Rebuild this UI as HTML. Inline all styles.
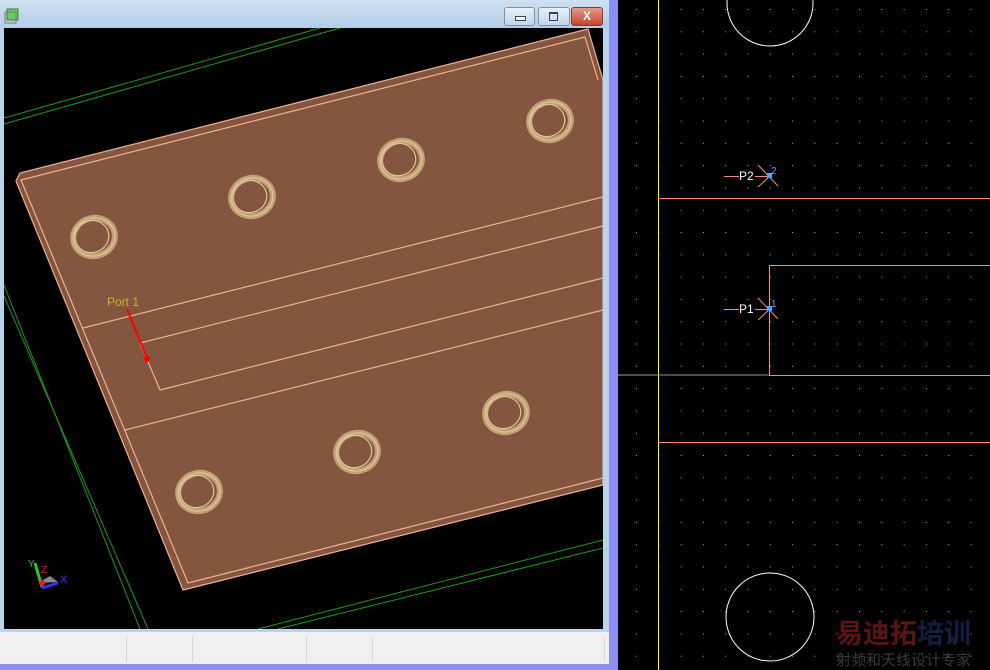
<!DOCTYPE html><html><head><style>
body{margin:0;width:990px;height:670px;overflow:hidden;background:#000;position:relative;font-family:"Liberation Sans",sans-serif}
.win{position:absolute;left:0;top:0;width:609px;height:670px;background:#b9d3ea}
.tb{position:absolute;left:0;top:0;width:609px;height:28px;background:linear-gradient(#cfe0f1,#b3cde8)}
.btn{position:absolute;top:7px;height:17px;border:1px solid #7d91ad;border-radius:3px;background:linear-gradient(#e8f0f8,#c4d5ea)}
.status{position:absolute;left:0;top:632px;width:609px;height:32px;background:#f0f0f0}
.purple{position:absolute;left:609px;top:0;width:9px;height:670px;background:#8c8ef0}
.pb{position:absolute;left:0;top:664px;width:618px;height:6px;background:#8c8ef0}
</style></head><body>
<div class="win">
<div class="tb"></div>
<svg style="position:absolute;left:4px;top:8px" width="16" height="16"><rect x="3" y="1" width="11" height="11" fill="#6c6" stroke="#474"/><rect x="1" y="4" width="11" height="11" fill="none" stroke="#777"/></svg>
<div class="btn" style="left:504px;width:29px"><div style="position:absolute;left:10px;top:8px;width:9px;height:3px;border:1px solid #345;background:#fff"></div></div>
<div class="btn" style="left:538px;width:30px"><div style="position:absolute;left:10px;top:4px;width:7px;height:6px;border:1px solid #345;border-top-width:2px"></div></div>
<div class="btn" style="left:571px;width:30px;background:linear-gradient(#e49a88,#c8452f);border-color:#8a3a2a;color:#fff;font-weight:bold;font-size:12px;text-align:center;line-height:17px">X</div>
<svg style="position:absolute;left:4px;top:28px" width="599" height="601" viewBox="4 28 599 601">
<rect x="4" y="28" width="599" height="601" fill="#000"/>
<g stroke="#1c9a1c" fill="none" stroke-width="1">
<line x1="4" y1="118" x2="320" y2="28"/><line x1="4" y1="124" x2="340" y2="28"/>
<line x1="4" y1="285" x2="140" y2="629"/><line x1="4" y1="296" x2="148" y2="629"/>
<line x1="258" y1="629" x2="603" y2="540"/><line x1="278" y1="629" x2="603" y2="548"/>
</g>
<polygon points="16,181 20,173 588,29 603,80 603,485 183,590" fill="#845640" stroke="#f0b090" stroke-width="1.2"/>
<g stroke="#f0b090" fill="none" stroke-width="1.2">
<polyline points="21,180 585,37 598,80"/>
<polyline points="21,180 188,583 603,478"/>
<polyline points="83,328 603,197"/>
<polyline points="603,226 140,343 160,390 603,278"/>
<polyline points="125,430 603,310"/>
</g>
<g fill="none" stroke="#e0c49a" stroke-width="1.2">
<g transform="translate(94,237) rotate(-15)"><ellipse rx="21" ry="19" stroke-width="6" stroke="#c4a078"/><ellipse rx="21" ry="19"/><ellipse cx="-2" cy="-1" rx="17" ry="16"/></g>
<g transform="translate(252,197) rotate(-15)"><ellipse rx="21" ry="19" stroke-width="6" stroke="#c4a078"/><ellipse rx="21" ry="19"/><ellipse cx="-2" cy="-1" rx="17" ry="16"/></g>
<g transform="translate(401,160) rotate(-15)"><ellipse rx="21" ry="19" stroke-width="6" stroke="#c4a078"/><ellipse rx="21" ry="19"/><ellipse cx="-2" cy="-1" rx="17" ry="16"/></g>
<g transform="translate(550,121) rotate(-15)"><ellipse rx="21" ry="19" stroke-width="6" stroke="#c4a078"/><ellipse rx="21" ry="19"/><ellipse cx="-2" cy="-1" rx="17" ry="16"/></g>
<g transform="translate(199,492) rotate(-15)"><ellipse rx="21" ry="19" stroke-width="6" stroke="#c4a078"/><ellipse rx="21" ry="19"/><ellipse cx="-2" cy="-1" rx="17" ry="16"/></g>
<g transform="translate(357,452) rotate(-15)"><ellipse rx="21" ry="19" stroke-width="6" stroke="#c4a078"/><ellipse rx="21" ry="19"/><ellipse cx="-2" cy="-1" rx="17" ry="16"/></g>
<g transform="translate(506,413) rotate(-15)"><ellipse rx="21" ry="19" stroke-width="6" stroke="#c4a078"/><ellipse rx="21" ry="19"/><ellipse cx="-2" cy="-1" rx="17" ry="16"/></g>
</g>
<text x="107" y="306" fill="#c8b030" font-size="12" font-family="Liberation Sans">Port 1</text>
<line x1="127" y1="309" x2="147" y2="358" stroke="#f00" stroke-width="2"/>
<circle cx="147" cy="359" r="3" fill="#f00"/>
<line x1="35" y1="563" x2="42" y2="587" stroke="#2c2" stroke-width="3"/>
<polygon points="38,583 50,576 58,582" fill="#888"/>
<line x1="42" y1="588" x2="58" y2="583" stroke="#33f" stroke-width="3"/>
<circle cx="42" cy="583" r="3" fill="#d22"/>
<text x="28" y="567" fill="#2c2" font-size="10">Y</text><text x="41" y="573" fill="#d22" font-size="10">Z</text><text x="60" y="583" fill="#33f" font-size="11">X</text>
</svg>
<div class="status">
<div style="position:absolute;left:126px;top:4px;width:1px;height:26px;background:#d6d6d6"></div>
<div style="position:absolute;left:192px;top:4px;width:1px;height:26px;background:#d6d6d6"></div>
<div style="position:absolute;left:306px;top:4px;width:1px;height:26px;background:#d6d6d6"></div>
<div style="position:absolute;left:372px;top:4px;width:1px;height:26px;background:#d6d6d6"></div>
<div style="position:absolute;left:604px;top:4px;width:1px;height:26px;background:#d6d6d6"></div>
</div>
</div>
<div class="purple"></div><div class="pb"></div>
<svg style="position:absolute;left:618px;top:0" width="372" height="670" viewBox="618 0 372 670">
<defs><pattern id="d" x="636" y="9" width="22.3" height="22.3" patternUnits="userSpaceOnUse"><rect x="0" y="0" width="1" height="1" fill="#aaa"/></pattern></defs>
<rect x="618" y="0" width="372" height="670" fill="url(#d)"/>
<line x1="658.5" y1="0" x2="658.5" y2="670" stroke="#ff0" stroke-width="1"/>
<line x1="618" y1="375" x2="769" y2="375" stroke="#999" stroke-width="1"/>
<g stroke="#ff8878" fill="none" stroke-width="1">
<line x1="658" y1="198.5" x2="990" y2="198.5"/><line x1="658" y1="442.5" x2="990" y2="442.5"/>
<polyline points="990,265.5 769.5,265.5 769.5,375.5 990,375.5"/>
<line x1="724" y1="176.5" x2="769" y2="176.5"/><line x1="724" y1="309.5" x2="769" y2="309.5"/>
<line x1="758" y1="165" x2="778" y2="186"/><line x1="758" y1="187" x2="770" y2="176"/>
<line x1="758" y1="298" x2="778" y2="319"/><line x1="758" y1="320" x2="770" y2="309"/>
</g>
<circle cx="770" cy="3" r="43" fill="none" stroke="#fff"/>
<circle cx="770" cy="617" r="44" fill="none" stroke="#fff"/>
<rect x="739" y="170" width="16" height="11" fill="#000"/><rect x="739" y="303" width="16" height="11" fill="#000"/>
<text x="739" y="180" fill="#fff" font-size="12">P2</text><text x="739" y="313" fill="#fff" font-size="12">P1</text>
<rect x="767" y="173" width="5" height="5" fill="#4af"/><rect x="767" y="306" width="5" height="5" fill="#4af"/>
<text x="771" y="174" fill="#4af" font-size="10">2</text><text x="771" y="307" fill="#4af" font-size="10">1</text>
<text x="836" y="643" fill="#5a1414" font-size="27" font-weight="bold" font-family="Noto Sans CJK SC,sans-serif">易迪拓</text>
<text x="917" y="643" fill="#122042" font-size="27" font-weight="bold" font-family="Noto Sans CJK SC,sans-serif">培训</text>
<text x="836" y="665" fill="#3a3a3a" font-size="15" font-family="Noto Sans CJK SC,sans-serif">射频和天线设计专家</text>
</svg>
</body></html>
